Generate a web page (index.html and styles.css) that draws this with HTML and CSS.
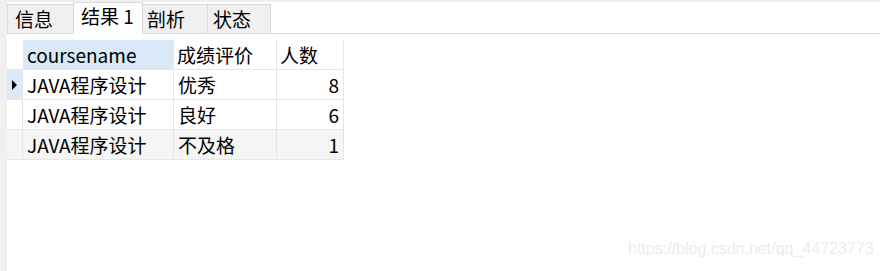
FILE: index.html
```html
<!DOCTYPE html>
<html lang="zh-CN">
<head>
<meta charset="utf-8">
<title>结果 1</title>
<link rel="stylesheet" href="styles.css">
</head>
<body>
<div class="window">
  <div class="side"></div>
  <div class="main">
    <div class="tabbar">
      <div class="tab t1">信息</div>
      <div class="tab t2 active">结果 1</div>
      <div class="tab t3">剖析</div>
      <div class="tab t4">状态</div>
    </div>
    <div class="grid">
      <div class="cell ind hd"></div>
      <div class="cell hd sel">coursename</div>
      <div class="cell hd">成绩评价</div>
      <div class="cell hd">人数</div>

      <div class="cell ind cur"><span class="arrow"></span></div>
      <div class="cell">JAVA程序设计</div>
      <div class="cell">优秀</div>
      <div class="cell num">8</div>

      <div class="cell ind"></div>
      <div class="cell">JAVA程序设计</div>
      <div class="cell">良好</div>
      <div class="cell num">6</div>

      <div class="cell ind alt"></div>
      <div class="cell alt">JAVA程序设计</div>
      <div class="cell alt">不及格</div>
      <div class="cell num alt">1</div>
    </div>
  </div>
</div>
<div class="watermark">https://blog.csdn.net/qq_44723773</div>
</body>
</html>
```
FILE: styles.css
```css
html, body {
  margin: 0;
  padding: 0;
  background: #ffffff;
}
body {
  width: 880px;
  height: 271px;
  overflow: hidden;
  position: relative;
  font-family: "Noto Sans CJK SC", "Noto Sans", sans-serif;
  font-size: 19px;
  color: #000;
}
.window {
  display: flex;
  height: 271px;
}
.side {
  width: 7px;
  background: #f0f0f0;
  flex: none;
}
.main {
  flex: 1;
}
.tabbar {
  box-sizing: border-box;
  height: 34px;
  border-top: 2px solid #f0f0f0;
  border-bottom: 1px solid #d9d9d9;
  display: flex;
  align-items: flex-end;
}
.tab {
  box-sizing: border-box;
  height: 30px;
  margin-bottom: -1px;
  background: #f0f0f0;
  border: 1px solid #d9d9d9;
  line-height: 27px;
  padding-left: 7px;
  white-space: nowrap;
}
.tab + .tab {
  margin-left: -1px;
}
.t1 { width: 67px; }
.t2 { width: 70px; }
.t3 { width: 66px; padding-left: 4px; }
.t4 { width: 64px; padding-left: 5px; }
.tab.active {
  height: 32px;
  background: #ffffff;
  border-bottom-color: #ffffff;
  line-height: 26px;
  position: relative;
  z-index: 1;
}
.grid {
  margin-top: 6px;
  display: grid;
  grid-template-columns: 16px 151px 103px 67px;
}
.cell {
  box-sizing: border-box;
  height: 30px;
  border-right: 1px solid #e6e6e6;
  border-bottom: 1px solid #e6e6e6;
  line-height: 29px;
  padding: 0 4px 0 4px;
  white-space: nowrap;
  overflow: hidden;
}
.cell.hd {
  padding-left: 3px;
}
.cell.hd.sel {
  background: #d9e9f8;
  padding-left: 4px;
}
.cell.ind.hd {
  border-right-color: #ffffff;
}
.cell.ind {
  padding: 0;
  display: flex;
  align-items: center;
  padding-left: 5px;
}
.cell.cur {
  background: #dce9f6;
}
.arrow {
  width: 0;
  height: 0;
  border-left: 5px solid #000;
  border-top: 5px solid transparent;
  border-bottom: 5px solid transparent;
}
.cell.num {
  text-align: right;
  padding-right: 4px;
}
.cell.alt {
  background: #f6f6f6;
}
.watermark {
  position: absolute;
  left: 628px;
  top: 240px;
  font-family: "Liberation Sans", Arial, sans-serif;
  font-size: 16px;
  color: #ececec;
  white-space: nowrap;
}
```
